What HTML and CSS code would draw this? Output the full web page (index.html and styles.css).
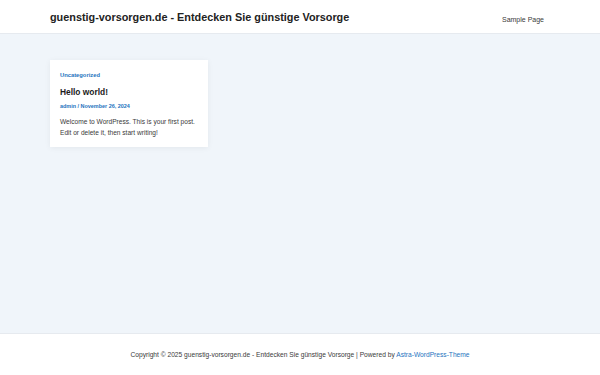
FILE: index.html
```html
<!DOCTYPE html>
<html lang="de">
<head>
<meta charset="utf-8">
<title>guenstig-vorsorgen.de</title>
<link rel="stylesheet" href="styles.css">
</head>
<body>
<div class="page">
  <header class="site-header">
    <div class="site-title">guenstig-vorsorgen.de - Entdecken Sie günstige Vorsorge</div>
    <nav class="nav"><a href="#">Sample Page</a></nav>
  </header>
  <main class="content">
    <article class="card">
      <div class="cat">Uncategorized</div>
      <h2 class="post-title">Hello world!</h2>
      <div class="meta">admin / November 26, 2024</div>
      <p class="excerpt">Welcome to WordPress. This is your first post. Edit or delete it, then start writing!</p>
    </article>
  </main>
  <footer class="site-footer">
    <span>Copyright © 2025 guenstig-vorsorgen.de - Entdecken Sie günstige Vorsorge | Powered by <a href="#">Astra-WordPress-Theme</a></span>
  </footer>
</div>
</body>
</html>
```
FILE: styles.css
```css
* { box-sizing: border-box; }
html, body { margin: 0; padding: 0; }
body {
  font-family: "Liberation Sans", Arial, sans-serif;
  color: #3a3a3a;
  background: #f0f5fa;
}
.page {
  display: flex;
  flex-direction: column;
  min-height: 375px;
}
.site-header {
  height: 34px;
  background: #fff;
  border-bottom: 1px solid #e6eaef;
  display: flex;
  align-items: center;
  justify-content: space-between;
  padding: 0 56px 0 50px;
}
.site-title {
  font-size: 10.85px;
  font-weight: bold;
  color: #222;
}
.nav a {
  font-size: 7px;
  color: #3a3a3a;
  text-decoration: none;
}
.content {
  flex: 1;
  padding: 26px 50px;
}
.card {
  width: 158px;
  background: #fff;
  padding: 11px 10px 9px;
  box-shadow: 0 1px 6px rgba(0, 0, 0, 0.06);
}
.cat {
  font-size: 5.8px;
  font-weight: bold;
  color: #1e73be;
  line-height: 9px;
}
.post-title {
  margin: 6px 0 0;
  font-size: 8.4px;
  font-weight: bold;
  color: #1b1b1b;
  line-height: 12px;
}
.meta {
  margin-top: 4px;
  font-size: 5.45px;
  font-weight: bold;
  color: #1e73be;
  line-height: 8px;
}
.excerpt {
  margin: 7px 0 0;
  font-size: 6.6px;
  line-height: 10.5px;
  color: #3a3a3a;
}
.site-footer {
  height: 42px;
  background: #fff;
  border-top: 1px solid #e6eaef;
  display: flex;
  align-items: center;
  justify-content: center;
  font-size: 6.65px;
  color: #3a3a3a;
}
.site-footer a {
  color: #1e73be;
  text-decoration: none;
}
```
